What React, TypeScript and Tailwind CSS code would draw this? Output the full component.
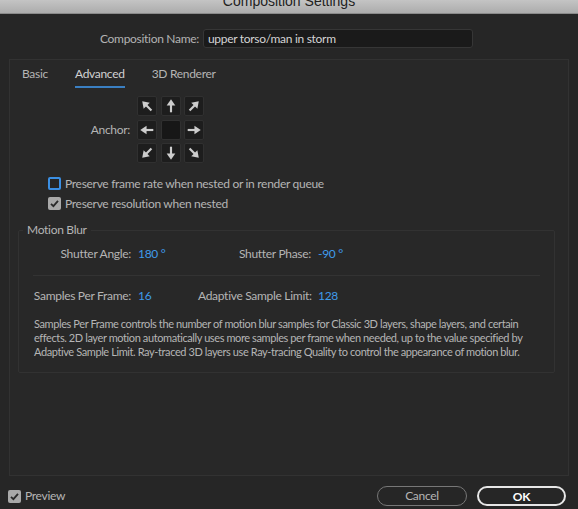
import React from 'react'

const FONT = "font-['Lato','Open_Sans',sans-serif]"

// anchor grid: rotation per cell, null = centre
const ANCHORS: (number | null)[] = [-45, 0, 45, -90, null, 90, -135, 180, 135]

function Arrow({ deg }: { deg: number }) {
  return (
    <svg width="18" height="18" viewBox="0 0 20 20">
      <g transform={`rotate(${deg} 10 10)`} fill="#cdcdcd" stroke="#cdcdcd">
        <line x1="10" y1="17" x2="10" y2="8" strokeWidth="2.4" />
        <polygon points="10,2.5 5.2,9.5 14.8,9.5" stroke="none" />
      </g>
    </svg>
  )
}

function Check({ on, focus }: { on?: boolean; focus?: boolean }) {
  if (focus) {
    return <span className="w-[13px] h-[13px] rounded-[2px] border-2 border-[#3b8fe3] bg-[#262626] shrink-0" />
  }
  return (
    <span className="w-[13px] h-[13px] rounded-[2px] bg-[#a9a9a9] flex items-center justify-center shrink-0">
      {on && (
        <svg width="11" height="11" viewBox="0 0 11 11">
          <path d="M2 5.8 L4.4 8.2 L9 2.8" fill="none" stroke="#2a2a2a" strokeWidth="1.8" />
        </svg>
      )}
    </span>
  )
}

export default function App() {
  return (
    <div className={`w-[578px] h-[509px] bg-[#262626] flex flex-col text-[12px] leading-[18px] tracking-[-0.3px] text-[#b5b5b5] ${FONT} overflow-hidden`}>
      {/* title bar */}
      <div className="h-[14px] bg-gradient-to-b from-[#c4c4c4] to-[#acacac] border-b border-[#8a8a8a] overflow-hidden flex justify-center">
        <span className="text-[14px] leading-[14px] mt-[-6px] tracking-normal text-[#222] font-['Liberation_Sans',sans-serif]">
          Composition Settings
        </span>
      </div>

      {/* name */}
      <div className="flex items-center mt-[15px] ml-[100px] gap-[4px]">
        <span className="text-[#b3b3b3]">Composition Name:</span>
        <div className="w-[270px] h-[19px] bg-[#1a1a1a] border border-[#363636] rounded-[3px] flex items-center px-[4px] text-[#d4d4d4]">
          upper torso/man in storm
        </div>
      </div>

      {/* main panel */}
      <div className="mx-[9px] mt-[11px] h-[417px] border border-[#323232] bg-[#282828] flex flex-col">
        {/* tabs */}
        <div className="flex items-start gap-[27px] pl-[12px] pt-[5px]">
          <span>Basic</span>
          <span className="flex flex-col text-[#d2d2d2]">
            Advanced
            <span className="h-[2px] bg-[#3a7fc2] mt-[3px]" />
          </span>
          <span>3D Renderer</span>
        </div>

        {/* anchor */}
        <div className="flex items-center mt-[8px]">
          <span className="w-[127px] text-right pr-[7px]">Anchor:</span>
          <div className="grid grid-cols-3 gap-[3.5px]">
            {ANCHORS.map((d, i) => (
              <div
                key={i}
                className={`w-[20px] h-[20px] rounded-[2px] border border-[#303030] flex items-center justify-center ${d === null ? 'bg-[#171717]' : 'bg-[#1d1d1d]'}`}
              >
                {d !== null && <Arrow deg={d} />}
              </div>
            ))}
          </div>
        </div>

        {/* checkboxes */}
        <div className="flex flex-col gap-[3px] ml-[38px] mt-[12px] leading-[17px]">
          <label className="flex items-center gap-[4px]">
            <Check focus />
            Preserve frame rate when nested or in render queue
          </label>
          <label className="flex items-center gap-[4px]">
            <Check on />
            Preserve resolution when nested
          </label>
        </div>

        {/* motion blur group */}
        <div className="relative ml-[8px] mr-[13px] mt-[18px] h-[143px] border border-[#323232] rounded-[2px] flex flex-col leading-[16px]">
          <span className="absolute left-[4px] top-[-9px] bg-[#282828] px-[4px]">Motion Blur</span>
          <div className="flex items-center mt-[15px] whitespace-nowrap">
            <span className="w-[112px] text-right">Shutter Angle:</span>
            <span className="ml-[7px] w-[60px] text-[#3f9bea]">180 °</span>
            <span className="w-[113px] text-right">Shutter Phase:</span>
            <span className="ml-[7px] text-[#3f9bea]">-90 °</span>
          </div>
          <div className="h-px bg-[#333] ml-[14px] mr-[14px] mt-[13px]" />
          <div className="flex items-center mt-[12px] whitespace-nowrap">
            <span className="w-[112px] text-right">Samples Per Frame:</span>
            <span className="ml-[7px] w-[60px] text-[#3f9bea]">16</span>
            <span className="w-[113px] text-right">Adaptive Sample Limit:</span>
            <span className="ml-[7px] text-[#3f9bea]">128</span>
          </div>
          <p className="ml-[15px] mt-[13px] leading-[14px] text-[11px] tracking-[-0.4px] whitespace-nowrap">
            Samples Per Frame controls the number of motion blur samples for Classic 3D layers, shape layers, and certain
            <br />
            effects. 2D layer motion automatically uses more samples per frame when needed, up to the value specified by
            <br />
            Adaptive Sample Limit. Ray-traced 3D layers use Ray-tracing Quality to control the appearance of motion blur.
          </p>
        </div>
      </div>

      {/* footer */}
      <div className="flex items-center mt-[10px] pl-[8px] pr-[12px]">
        <label className="flex items-center gap-[4px]">
          <Check on />
          Preview
        </label>
        <div className="ml-auto flex gap-[10px]">
          <button className="w-[90px] h-[20px] rounded-full border border-[#777] text-[#b5b5b5]">Cancel</button>
          <button className="w-[89px] h-[20px] rounded-full border-2 border-[#e6e6e6] text-white font-bold">OK</button>
        </div>
      </div>
    </div>
  )
}
